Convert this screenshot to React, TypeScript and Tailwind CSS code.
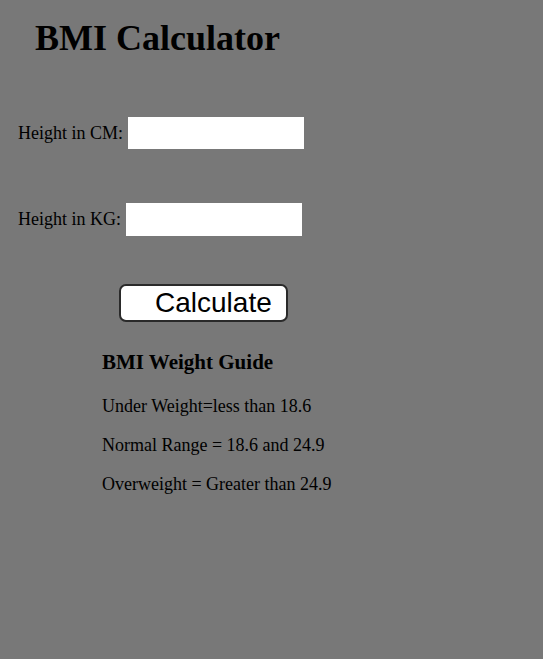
export default function App() {
  return (
    <div className="min-h-screen bg-[#787878] font-['Liberation_Serif',serif] text-black">
      {/* title */}
      <h1 className="pl-[35px] pt-[18px] text-[36px] font-bold leading-[41px]">BMI Calculator</h1>

      {/* inputs */}
      <div className="mt-[58px] flex flex-col gap-[54px] pl-[18px]">
        <label className="flex items-center gap-[5px] text-[18px] leading-[21px]">
          <span>Height in CM:</span>
          <input type="text" className="h-[32px] w-[176px] border-0 bg-white outline-none" />
        </label>
        <label className="flex items-center gap-[5px] text-[18px] leading-[21px]">
          <span>Height in KG:</span>
          <input type="text" className="h-[33px] w-[176px] border-0 bg-white outline-none" />
        </label>
      </div>

      {/* button */}
      <div className="mt-[48px] pl-[119px]">
        <button className="flex h-[38px] w-[169px] items-center rounded-[7px] border-2 border-[#2a2a2a] bg-white pl-[34px] font-['Liberation_Sans',sans-serif] text-[28px] leading-none">
          Calculate
        </button>
      </div>

      {/* guide */}
      <div className="mt-[28px] flex flex-col pl-[102px]">
        <h3 className="text-[21px] font-bold leading-[24px]">BMI Weight Guide</h3>
        <p className="mt-[22px] text-[18px] leading-[21px]">Under Weight=less than 18.6</p>
        <p className="mt-[18px] text-[18px] leading-[21px]">Normal Range = 18.6 and 24.9</p>
        <p className="mt-[18px] text-[18px] leading-[21px]">Overweight = Greater than 24.9</p>
      </div>
    </div>
  );
}
